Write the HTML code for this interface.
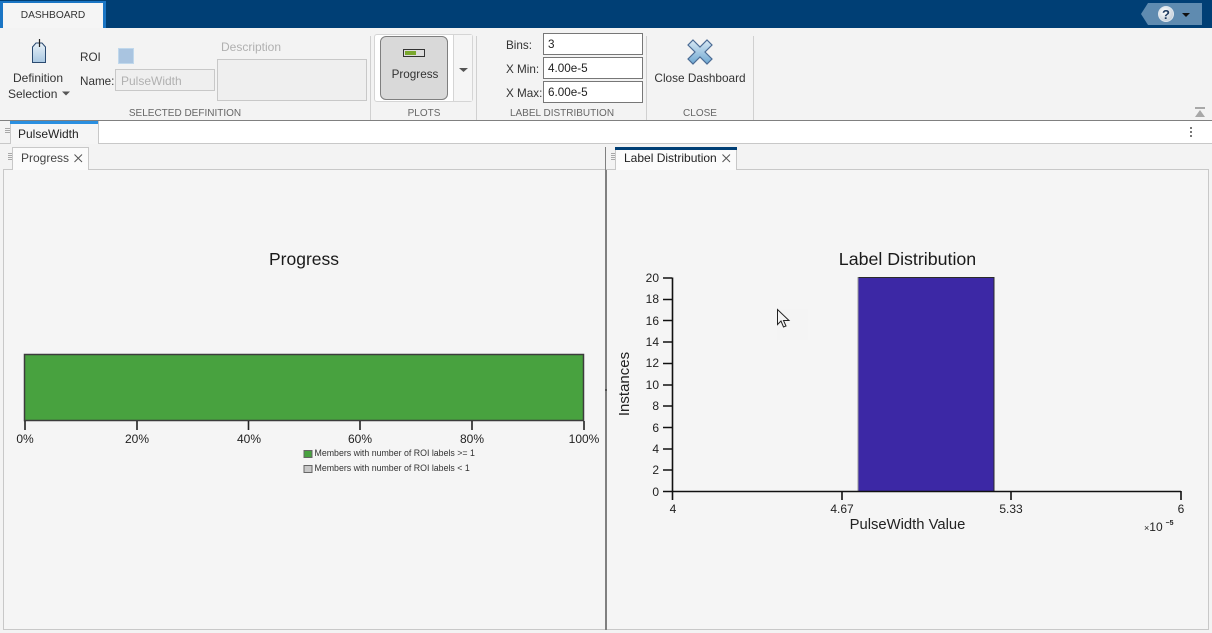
<!DOCTYPE html>
<html><head><meta charset="utf-8">
<style>
html,body{margin:0;padding:0;width:1212px;height:633px;overflow:hidden;background:#f3f3f3;font-family:"Liberation Sans",sans-serif;}
#p{position:relative;width:1212px;height:633px;overflow:hidden;}
.a{position:absolute;box-sizing:border-box;}
.t{position:absolute;white-space:nowrap;font-size:12px;line-height:14px;color:#333;}
.c{transform:translateX(-50%);}
.r{transform:translateX(-100%);}
.g{color:#666;font-size:10px;}
.i{position:absolute;box-sizing:border-box;background:#fff;border:1px solid #777;font-size:11.7px;line-height:22px;padding-left:4px;color:#222;width:100px;height:22px;left:543px;}
svg{position:absolute;left:0;top:0;}
svg text{font-family:"Liberation Sans",sans-serif;}
</style></head><body><div id="p">
<div class="a" style="left:0;top:0;width:1212px;height:28px;background:#003f75"></div>
<div class="a" style="left:0;top:1px;width:106px;height:27px;background:#1a75c4"></div>
<div class="a" style="left:3px;top:3px;width:100px;height:25px;background:#f5f5f5"></div>
<div class="t c" style="left:53px;top:9px;font-size:10.2px;color:#333">DASHBOARD</div>

<div class="a" style="left:0;top:28px;width:1212px;height:92px;background:#f3f3f3"></div>
<div class="a" style="left:0;top:120px;width:1212px;height:1px;background:#808080"></div>
<div class="a" style="left:0;top:121px;width:1212px;height:22px;background:#fff"></div>
<div class="a" style="left:0;top:143px;width:1212px;height:1px;background:#c8c8c8"></div>
<div class="a" style="left:0;top:121px;width:10px;height:22px;background:#f3f3f3"></div>
<div class="a" style="left:10px;top:121px;width:89px;height:23px;background:#f5f5f5;border-right:1px solid #c8c8c8;border-left:1px solid #c8c8c8"></div>
<div class="a" style="left:10px;top:121px;width:88px;height:3px;background:#2a8fe0"></div>
<div class="t" style="left:18px;top:127px;color:#222">PulseWidth</div>

<div class="a" style="left:0;top:144px;width:1212px;height:489px;background:#f3f3f3"></div>
<div class="a" style="left:3px;top:169px;width:603px;height:461px;background:#f5f5f5;border:1px solid #c8c8c8"></div>
<div class="a" style="left:606px;top:169px;width:603px;height:461px;background:#f5f5f5;border:1px solid #c8c8c8"></div>
<div class="a" style="left:605px;top:147px;width:1px;height:23px;background:#808080"></div>
<div class="a" style="left:605px;top:170px;width:2px;height:460px;background:#808080"></div>
<div class="a" style="left:12px;top:147px;width:77px;height:23px;background:#fbfbfb;border:1px solid #c8c8c8;border-bottom:none"></div>
<div class="a" style="left:615px;top:147px;width:122px;height:23px;background:#fbfbfb;border:1px solid #c8c8c8;border-bottom:none"></div>
<div class="a" style="left:615px;top:147px;width:122px;height:3px;background:#003f75"></div>
<div class="t" style="left:21px;top:151px;color:#444">Progress</div>
<div class="t" style="left:624px;top:151px;color:#222">Label Distribution</div>

<!-- ribbon text -->
<div class="t c" style="left:38px;top:71px">Definition</div>
<div class="t" style="left:8px;top:87px">Selection</div>
<div class="t" style="left:80px;top:51px;font-size:11.7px">ROI</div>
<div class="t" style="left:80px;top:75px;font-size:11.7px">Name:</div>
<div class="a" style="left:115px;top:69px;width:100px;height:22px;background:#efefef;border:1px solid #c8c8c8"></div>
<div class="t" style="left:121px;top:74px;color:#b0b0b0">PulseWidth</div>
<div class="t" style="left:221px;top:40px;color:#b0b0b0">Description</div>
<div class="a" style="left:217px;top:59px;width:150px;height:42px;background:#efefef;border:1px solid #c8c8c8"></div>
<div class="a" style="left:118px;top:48px;width:16px;height:16px;background:#a9c4e0;border:1px solid #c0d8ec"></div>
<div class="t g c" style="left:185px;top:107px">SELECTED DEFINITION</div>
<div class="t g c" style="left:424px;top:107px">PLOTS</div>
<div class="t g c" style="left:562px;top:107px">LABEL DISTRIBUTION</div>
<div class="t g c" style="left:700px;top:107px">CLOSE</div>

<div class="a" style="left:374px;top:34px;width:99px;height:68px;background:#fff;border:1px solid #d5d5d5;border-radius:3px"></div>
<div class="a" style="left:453px;top:35px;width:19px;height:66px;background:#f5f5f5;border-left:1px solid #d5d5d5"></div>
<div class="a" style="left:380px;top:36px;width:68px;height:64px;background:#d9d9d9;border:1px solid #7f7f7f;border-radius:6px"></div>
<div class="a" style="left:403px;top:49px;width:22px;height:8px;background:#ddd;border:1px solid #333"></div>
<div class="a" style="left:405px;top:51px;width:11px;height:4px;background:#7aa82e"></div>
<div class="t c" style="left:415px;top:68px;color:#333;font-size:11.7px">Progress</div>

<div class="t" style="left:506px;top:39px;font-size:11.7px">Bins:</div>
<div class="t" style="left:506px;top:63px;font-size:11.7px">X Min:</div>
<div class="t" style="left:506px;top:87px;font-size:11.7px">X Max:</div>
<div class="i" style="top:33px">3</div>
<div class="i" style="top:57px">4.00e-5</div>
<div class="i" style="top:81px">6.00e-5</div>
<div class="t c" style="left:700px;top:71px;font-size:11.8px">Close Dashboard</div>

<!-- plot text -->
<div class="t c" style="left:304px;top:249px;font-size:17.5px;line-height:20px;color:#1a1a1a">Progress</div>
<div class="t c" style="left:907.500px;top:249px;font-size:17.800px;line-height:20px;color:#1a1a1a">Label Distribution</div>
<div class="t c" style="left:25px;top:432px;color:#222">0%</div>
<div class="t c" style="left:137px;top:432px;color:#222">20%</div>
<div class="t c" style="left:249px;top:432px;color:#222">40%</div>
<div class="t c" style="left:360px;top:432px;color:#222">60%</div>
<div class="t c" style="left:472px;top:432px;color:#222">80%</div>
<div class="t c" style="left:584px;top:432px;color:#222">100%</div>
<div class="t" style="left:314.500px;top:447px;font-size:8.800px;line-height:13px;color:#333">Members with number of ROI labels &gt;= 1</div>
<div class="t" style="left:314.500px;top:462px;font-size:8.800px;line-height:13px;color:#333">Members with number of ROI labels &lt; 1</div>

<div class="t r" style="left:659px;top:271px;color:#222">20</div>
<div class="t r" style="left:659px;top:292px;color:#222">18</div>
<div class="t r" style="left:659px;top:314px;color:#222">16</div>
<div class="t r" style="left:659px;top:335px;color:#222">14</div>
<div class="t r" style="left:659px;top:356px;color:#222">12</div>
<div class="t r" style="left:659px;top:378px;color:#222">10</div>
<div class="t r" style="left:659px;top:399px;color:#222">8</div>
<div class="t r" style="left:659px;top:421px;color:#222">6</div>
<div class="t r" style="left:659px;top:442px;color:#222">4</div>
<div class="t r" style="left:659px;top:463px;color:#222">2</div>
<div class="t r" style="left:659px;top:485px;color:#222">0</div>
<div class="t c" style="left:673px;top:502px;color:#222">4</div>
<div class="t c" style="left:842px;top:502px;color:#222">4.67</div>
<div class="t c" style="left:1011px;top:502px;color:#222">5.33</div>
<div class="t c" style="left:1181px;top:502px;color:#222">6</div>
<div class="t c" style="left:907.500px;top:517px;font-size:14.800px;line-height:16px;color:#222">PulseWidth Value</div>
<div class="t" style="left:1144px;top:520px;font-size:12px;color:#222"><span style="font-size:9px">×</span>10</div>
<div class="t" style="left:1165.500px;top:519px;font-size:7px;line-height:10px;color:#222;font-weight:bold">−5</div>
<div class="t" style="left:625px;top:384px;font-size:15px;line-height:16px;color:#222;transform:translate(-50%,-50%) rotate(-90deg)">Instances</div>

<svg width="1212" height="633" viewBox="0 0 1212 633">
  <defs>
    <linearGradient id="tg" x1="0" y1="0" x2="0" y2="1"><stop offset="0" stop-color="#e8f1f8"/><stop offset="1" stop-color="#a9c8e2"/></linearGradient>
    <linearGradient id="xg" x1="0" y1="0" x2="0" y2="1"><stop offset="0" stop-color="#d8e8f4"/><stop offset="1" stop-color="#6fa8d2"/></linearGradient>
    <radialGradient id="qg" cx=".4" cy=".35" r=".8"><stop offset="0" stop-color="#fff"/><stop offset="1" stop-color="#b8c4d0"/></radialGradient>
  </defs>
  <path d="M32.500 62.500V47L36 43H42L45.500 47V62.500Z" fill="url(#tg)" stroke="#2b4a70" stroke-width="1"/>
  <path d="M39.500 39V47" stroke="#222" stroke-width="1.200"/>
  <path d="M62 91.500H70L66 95.500Z" fill="#555"/>
  <path d="M459 68H468L463.500 72Z" fill="#555"/>
  <path d="M693 40L700 47L707 40L712 45L705 52L712 59L707 64L700 57L693 64L688 59L695 52L688 45Z" fill="url(#xg)" stroke="#4b6b94" stroke-width="1.200"/>
  <g stroke="#d0d0d0"><path d="M370.500 36V120M476.500 36V120M646.500 36V120M753.500 36V120"/></g>
  <path d="M1148 3H1202V25H1148L1141 14Z" fill="#5f8bb0"/>
  <circle cx="1166" cy="14" r="7.500" fill="url(#qg)" stroke="#dfe7ee"/>
  <text x="1166" y="19" font-size="13" font-weight="bold" fill="#1e3a5f" text-anchor="middle">?</text>
  <path d="M1182 13H1190L1186 17Z" fill="#111"/>
  <path d="M1195 107H1205V109H1195Z" fill="#a8a8a8"/>
  <path d="M1195 117L1200 110L1205 117Z" fill="#a8a8a8"/>
  <g fill="#777"><rect x="1190" y="127" width="2" height="2"/><rect x="1190" y="131" width="2" height="2"/><rect x="1190" y="135" width="2" height="2"/></g>
  <g stroke="#a8a8a8"><path d="M5 128.500H10M5 130.500H10M5 132.500H10M8 153.500H12M8 155.500H12M8 157.500H12M8 159.500H12M611 153.500H615M611 155.500H615M611 157.500H615M611 159.500H615"/></g>
  <g stroke="#555" stroke-width="1"><path d="M74.500 154.500L82 162M82 154.500L74.500 162M722.500 154.500L730 162M730 154.500L722.500 162"/></g>
  <rect x="24.500" y="354.500" width="559" height="66" fill="#48a23f" stroke="#3c3c3c" stroke-width="1.500"/>
  <g stroke="#222" stroke-width="1.600"><path d="M25 421V430M137 421V430M248.500 421V430M360 421V430M472 421V430M584 421V430"/></g>
  <rect x="304" y="450.500" width="8" height="7" fill="#48a23f" stroke="#666"/>
  <rect x="304" y="465.500" width="8" height="7" fill="#c8c8c8" stroke="#666"/>
  <path d="M606 389V391" stroke="#222"/>
  <rect x="858" y="277.500" width="136" height="214" fill="#3c28a5" stroke="#2a2a2a" stroke-width="1"/>
  <path d="M858 277V491" stroke="#999" stroke-width="1"/>
  <g stroke="#111" stroke-width="1.600" fill="none">
    <path d="M672.500 277.500V492"/>
    <path d="M672 491.500H1181"/>
    <path d="M663 278H672M663 299.500H672M663 320.500H672M663 342H672M663 363.500H672M663 385H672M663 406H672M663 427.500H672M663 449H672M663 470H672M663 491.500H672"/>
    <path d="M672.500 491V500M842 491V500M1011 491V500M1181 491V500"/>
  </g>
  <rect x="777" y="309" width="31" height="31" fill="#f4f4f4"/>
  <path d="M777.500 309.500V324.500L781 321L783.500 327L786 326L783.500 320.500H789Z" fill="#f5f5f5" stroke="#222" stroke-width="1"/>
</svg>
</div></body></html>
